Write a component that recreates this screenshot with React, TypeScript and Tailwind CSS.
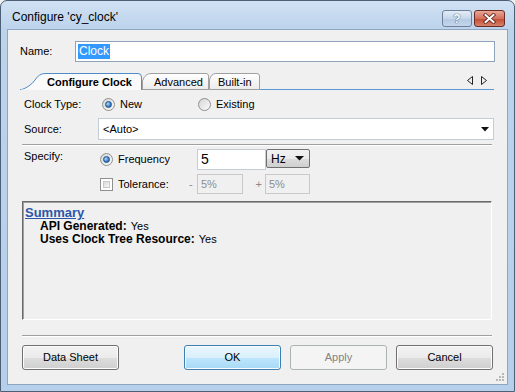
import React from "react";

function Radio({ checked }: { checked?: boolean }) {
  return (
    <span className="w-[13px] h-[13px] rounded-full border border-[#8e8f8f] bg-[linear-gradient(135deg,#d5d5d5,#fcfcfc)] flex items-center justify-center shrink-0">
      {checked && (
        <span className="w-[7px] h-[7px] rounded-full border border-[#1c4f86] bg-[radial-gradient(circle_at_35%_35%,#a8dcff,#2a6fb8_70%)]" />
      )}
    </span>
  );
}

function Checkbox() {
  return (
    <span className="w-[13px] h-[13px] border border-[#8e8f8f] bg-white p-[2px] shrink-0 flex">
      <span className="flex-1 border border-[#c8c8c8] bg-[linear-gradient(135deg,#d9d9d9,#f7f7f7)]" />
    </span>
  );
}

function Button({ label, kind }: { label: string; kind?: "default" | "disabled" }) {
  const cls =
    kind === "default"
      ? "border-[#3c7fb1] bg-[linear-gradient(to_bottom,#eaf6fd_0%,#d9f0fc_50%,#bee6fd_51%,#a7d9f5_100%)] text-black shadow-[inset_0_0_0_1px_#fcfcfc]"
      : kind === "disabled"
      ? "border-[#adb2b5] bg-[#f4f4f4] text-[#838383]"
      : "border-[#707070] bg-[linear-gradient(to_bottom,#f2f2f2_0%,#ebebeb_50%,#dddddd_51%,#cfcfcf_100%)] text-black shadow-[inset_0_0_0_1px_#fcfcfc]";
  return (
    <div className={`w-[97px] h-[25px] rounded-[3px] border flex items-center justify-center text-[11px] ${cls}`}>
      {label}
    </div>
  );
}

function Tabs() {
  return (
    <div className="relative ml-[12px] mt-[10px] w-[474px] h-[18px] text-[11px]">
      <svg className="absolute left-0 top-0" width="474" height="18" viewBox="0 0 474 18">
        <defs>
          <linearGradient id="tabg" x1="0" y1="0" x2="0" y2="1">
            <stop offset="0" stopColor="#ffffff" />
            <stop offset="1" stopColor="#ebebeb" />
          </linearGradient>
        </defs>
        <line x1="0" y1="17.5" x2="474" y2="17.5" stroke="#5a9bd5" />
        <path d="M189.5 17.5 L189.5 8 Q191 1.5 196 1.5 L237 1.5 Q239.5 1.5 239.5 4 L239.5 17.5 Z" fill="url(#tabg)" stroke="#a0a0a0" />
        <path d="M122.5 17.5 L122.5 9 Q125 1.5 131 1.5 L186 1.5 Q188.5 1.5 188.5 4 L188.5 17.5 Z" fill="url(#tabg)" stroke="#a0a0a0" />
        <path d="M0.5 18 Q10 15 15 8 Q19 1.5 25 1.5 L118 1.5 Q121.5 1.5 121.5 5 L121.5 18" fill="#fafafa" stroke="#4f8cc8" />
        <line x1="1" y1="18" x2="121" y2="18" stroke="#fafafa" strokeWidth="1" />
        <path d="M452.5 4.5 L452.5 12.5 L447.5 8.5 Z" fill="none" stroke="#222" />
        <path d="M461.5 4.5 L461.5 12.5 L466.5 8.5 Z" fill="none" stroke="#222" />
      </svg>
      <div className="relative flex h-[18px] items-center">
        <span className="ml-[27px] w-[107px] font-bold leading-[14px] pt-[2px]">Configure Clock</span>
        <span className="w-[64px] leading-[14px] pt-[2px]">Advanced</span>
        <span className="leading-[14px] pt-[2px]">Built-in</span>
      </div>
    </div>
  );
}

export default function App() {
  return (
    <div className="w-[515px] h-[392px] overflow-hidden bg-[#f0f0f0] font-['Liberation_Sans',Arial,sans-serif] text-black">
      <div className="w-full h-full flex flex-col rounded-t-[7px] border border-[#4d5f74] bg-[linear-gradient(to_bottom,#d0e1f3,#bcd3ec_28px,#b6cfea)]">
        {/* title bar */}
        <div className="h-[28px] flex items-start shrink-0">
          <span className="ml-[11px] mt-[9px] text-[12px] leading-[15px]">Configure 'cy_clock'</span>
          <div className="ml-auto mt-[9px] mr-[9px] flex gap-[2px]">
            <div className="w-[30px] h-[17px] rounded-[3px] border border-[#6e8099] bg-[linear-gradient(to_bottom,#e3ecf7,#c6d7eb_50%,#b3c8e2_51%,#c4d6ec)] flex items-center justify-center">
              <span className="text-[12px] font-bold leading-none text-white [text-shadow:0_0_1px_#3a4a60,0_0_1px_#3a4a60]">?</span>
            </div>
            <div className="w-[31px] h-[17px] rounded-[3px] border border-[#6b2a22] bg-[linear-gradient(to_bottom,#e9a797,#d4705c_50%,#c24a34_51%,#d5826b)] flex items-center justify-center">
              <svg width="13" height="11" viewBox="0 0 13 11">
                <path d="M2.5 2 L10.5 9 M10.5 2 L2.5 9" stroke="#5a1d15" strokeWidth="3.6" strokeLinecap="square" />
                <path d="M2.5 2 L10.5 9 M10.5 2 L2.5 9" stroke="#ffffff" strokeWidth="2" strokeLinecap="square" />
              </svg>
            </div>
          </div>
        </div>

        {/* client area */}
        <div className="relative mx-[6px] mb-[6px] flex-1 border border-[#8ea6c1] bg-[#f0f0f0] flex flex-col text-[11px]">
          {/* Name */}
          <div className="mt-[11px] h-[21px] flex items-center">
            <span className="w-[67px] pl-[12px]">Name:</span>
            <div className="w-[420px] h-[21px] border border-[#8fa3bb] bg-white flex items-center pl-[2px]">
              <span className="bg-[#3399ff] text-white px-[1px] leading-[15px] text-[12px]">Clock</span>
            </div>
          </div>

          <Tabs />

          {/* Clock Type */}
          <div className="mt-[4px] h-[20px] flex items-center">
            <span className="w-[94px] pl-[16px]">Clock Type:</span>
            <div className="w-[96px] flex items-center">
              <Radio checked />
              <span className="ml-[5px]">New</span>
            </div>
            <Radio />
            <span className="ml-[5px]">Existing</span>
          </div>

          {/* Source */}
          <div className="mt-[4px] h-[22px] flex items-center">
            <span className="w-[90px] pl-[16px]">Source:</span>
            <div className="w-[396px] h-[22px] border border-[#c5ccd6] bg-white flex items-center pl-[4px] pr-[4px]">
              <span>&lt;Auto&gt;</span>
              <svg className="ml-auto" width="8" height="5" viewBox="0 0 8 5">
                <path d="M0 0 L8 0 L4 4.5 Z" fill="#111" />
              </svg>
            </div>
          </div>

          {/* separator */}
          <div className="mt-[4px] ml-[14px] w-[470px] h-[2px] border-t border-[#a0a0a0] border-b border-b-white" />

          {/* Specify */}
          <div className="mt-[3px] h-[21px] flex items-start">
            <span className="w-[92px] pl-[16px] leading-[14px]">Specify:</span>
            <div className="w-[97px] h-[21px] flex items-center">
              <Radio checked />
              <span className="ml-[5px]">Frequency</span>
            </div>
            <div className="w-[69px] h-[21px] border border-[#c5ccd6] bg-white flex items-center pl-[3px] text-[14px]">5</div>
            <div className="w-[44px] h-[19px] rounded-[2px] border border-[#707070] bg-[linear-gradient(to_bottom,#f2f2f2_0%,#ebebeb_50%,#dddddd_51%,#cfcfcf_100%)] flex items-center pl-[4px] pr-[5px]">
              <span className="text-[12px]">Hz</span>
              <svg className="ml-auto" width="9" height="5" viewBox="0 0 9 5">
                <path d="M0 0 L9 0 L4.5 4.5 Z" fill="#111" />
              </svg>
            </div>
          </div>

          {/* Tolerance */}
          <div className="mt-[4px] h-[20px] flex items-center">
            <div className="ml-[92px] w-[88px] flex items-center">
              <Checkbox />
              <span className="ml-[5px]">Tolerance:</span>
            </div>
            <span className="w-[9px] pl-[1px] text-[#8a8a8a]">-</span>
            <div className="w-[46px] h-[20px] border border-[#c9c9c9] bg-[#f0f0f0] flex items-center pl-[3px] text-[#8d8d8d]">5%</div>
            <span className="w-[22px] text-right pr-[3px] text-[#8a8a8a]">+</span>
            <div className="w-[45px] h-[20px] border border-[#c9c9c9] bg-[#f0f0f0] flex items-center pl-[3px] text-[#8d8d8d]">5%</div>
          </div>

          {/* Summary */}
          <div className="mt-[7px] ml-[14px] w-[470px] h-[119px] border-t border-l border-[#696969] border-r border-b border-r-white border-b-white shadow-[inset_1px_1px_0_#a0a0a0] pt-[3px] pl-[2px] flex flex-col">
            <span className="font-bold text-[13px] leading-[15px] text-[#2b57a6] underline">Summary</span>
            <div className="pl-[15px] leading-[13px]">
              <span className="font-bold text-[12px]">API Generated:</span>
              <span className="ml-[4px]">Yes</span>
            </div>
            <div className="pl-[15px] leading-[13px]">
              <span className="font-bold text-[12px]">Uses Clock Tree Resource:</span>
              <span className="ml-[4px]">Yes</span>
            </div>
          </div>

          {/* separator */}
          <div className="mt-[15px] ml-[14px] w-[470px] h-[2px] border-t border-[#a0a0a0] border-b border-b-white" />

          {/* buttons */}
          <div className="mt-[8px] ml-[14px] w-[471px] flex items-center">
            <Button label="Data Sheet" />
            <div className="ml-auto flex gap-[9px]">
              <Button label="OK" kind="default" />
              <Button label="Apply" kind="disabled" />
              <Button label="Cancel" />
            </div>
          </div>

          {/* size grip */}
          <svg className="absolute right-[2px] bottom-[2px]" width="9" height="9" viewBox="0 0 9 9">
            <rect x="6" y="0" width="2" height="2" fill="#b8b8b8" />
            <rect x="3" y="3" width="2" height="2" fill="#b8b8b8" />
            <rect x="6" y="3" width="2" height="2" fill="#b8b8b8" />
            <rect x="0" y="6" width="2" height="2" fill="#b8b8b8" />
            <rect x="3" y="6" width="2" height="2" fill="#b8b8b8" />
            <rect x="6" y="6" width="2" height="2" fill="#b8b8b8" />
          </svg>
        </div>
      </div>
    </div>
  );
}
